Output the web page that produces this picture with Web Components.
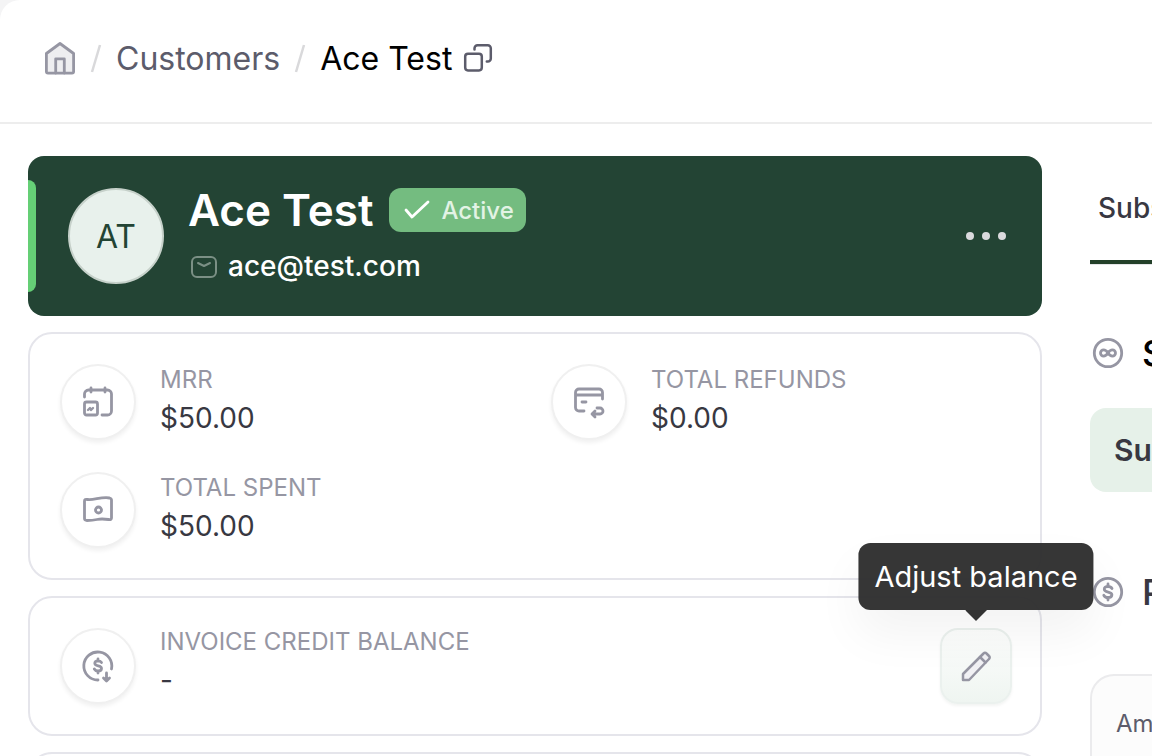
<!DOCTYPE html>
<html lang="en">
<head>
<meta charset="utf-8">
<title>Ace Test - Customers</title>
<style>
  body { margin: 0; background: #f4f4f5; font-family: Inter, "Liberation Sans", sans-serif; color: #383842; }
</style>
</head>
<body>
<customer-page></customer-page>

<script>
const icons = {
  home: '<path d="M2.400 10.500 16 .5l13.600 10V28.500a1.600 1.600 0 0 1-1.600 1.600H4a1.600 1.600 0 0 1-1.600-1.600z" fill="#eeeef0"/><path d="M11.700 30V15.800h8.600V30"/>',
  copy: '<rect x="3.200" y="10.800" width="16.600" height="16.600" rx="2.800"/><path d="M12.500 6.500V5.200a3 3 0 0 1 3-3h10.300a3 3 0 0 1 3 3v10.300a3 3 0 0 1-3 3h-1"/>',
  mail: '<rect x="2" y="5" width="24" height="20" rx="5"/><path d="m8 11 6 3 6-3"/>',
  check: '<path d="m3 14 6 7L25 6"/>',
  calendar: '<path d="M2.500 11V8a4 4 0 0 1 4-4h19a4 4 0 0 1 4 4v17a4 4 0 0 1-4 4H20"/><path d="M9 2v4M23 2v4"/><rect x="2.500" y="16" width="13" height="13" rx="2"/><path d="m6 24 2-2 1 2 2-2" stroke-width="2.400"/>',
  refund: '<path d="M11 25H6a3.500 3.500 0 0 1-3.500-3.500v-15A3.500 3.500 0 0 1 6 3h20a3.500 3.500 0 0 1 3.500 3.500V13M3 9h26M9 16h4"/><path d="M24 22h3a2.500 2.500 0 0 1 0 6h-7m2-3-3 3 3 3"/>',
  cash: '<path d="M2.500 7q0-2 3-1.500c6 1 14-3 22-1.500q2 .5 2 2v18q0 2-3 1.500-7-1-11.500 0t-10 1q-2.500 0-2.500-2z"/><circle cx="16.500" cy="16" r="3"/>',
  credit: '<path d="M29.500 19A14 14 0 1 0 16 30"/><path d="M19.500 12.500c-.8-1.200-2-1.700-3.500-1.700-2 0-3.200 1-3.200 2.500 0 3.700 6.700 1.500 6.700 5.200 0 1.600-1.500 2.500-3.500 2.500-1.700 0-3-.7-3.700-2M16 9v2m0 10v2"/><path d="M24.500 23v8m-3-3 3 3 3-3"/>',
  pencil: '<path d="M3 30v-6L23.500 3.500a2 2 0 0 1 3 0l2.500 2.500a2 2 0 0 1 0 3L9 30z" fill="#f1f1f4"/><path d="m20 7 5.500 5.500"/>',
  infinity: '<circle cx="16" cy="16" r="13.700"/><path d="M16 16c-1.300 2-2.600 3.100-4.400 3.100a3.100 3.100 0 0 1 0-6.200c1.800 0 3.100 1.100 4.400 3.100s2.600 3.100 4.400 3.100a3.100 3.100 0 0 0 0-6.200c-1.800 0-3.100 1.100-4.400 3.100z"/>',
  dollar: '<circle cx="16" cy="16" r="13.700"/><path d="M20 12.500c-.8-1.400-2.300-2-4-2-2.300 0-3.700 1-3.700 2.700 0 4 7.600 1.700 7.600 5.600 0 1.700-1.600 2.800-3.900 2.800-2 0-3.500-.8-4.200-2.300M16 8v2.500m0 11V24"/>',
  dots: '<g fill="#dadadd" stroke="none"><circle cx="6" cy="16" r="4"/><circle cx="22" cy="16" r="4"/><circle cx="38" cy="16" r="4"/></g>'
};

function define(name, render) {
  customElements.define(name, class extends HTMLElement {
    constructor() {
      super();
      this.attachShadow({ mode: 'open' });
    }
    connectedCallback() {
      const template = document.createElement('template');
      template.innerHTML = render(this);
      this.shadowRoot.replaceChildren(template.content.cloneNode(true));
    }
  });
}

define('ui-icon', el => {
  const size = el.getAttribute('size') || 32;
  const width = el.getAttribute('width') || size;
  return `<style>
    :host { display: block; flex: none; color: #9696a3; }
    svg { display: block; overflow: visible; }
  </style>
  <svg width="${width}" height="${size}" viewBox="0 0 ${width} ${size}" fill="none"
    stroke="currentColor" stroke-width="${el.getAttribute('stroke') || 2.8}" stroke-linecap="round" stroke-linejoin="round" aria-hidden="true">${icons[el.getAttribute('name')]}</svg>`;
});

define('crumb-bar', () => `<style>
  :host { display: block; background: #fff; border-bottom: 2px solid #ededed; border-radius: 20px 0 0 0; }
  nav { display: flex; align-items: center; height: 118px; padding: 0 44px 4px; font-size: 32px; line-height: 40px; }
  nav, a { color: #000; text-decoration: none; }
  .home { display: block; }
  .parent { color: #5c5c6b; }
  .sep { flex: none; width: 40px; display: grid; place-items: center; }
  .sep svg { display: block; }
  button { margin: 0 0 0 10px; padding: 0; border: 0; background: none; display: block; }
  ui-icon.copy { color: #5c5c6b; }
  </style>
  <nav aria-label="Breadcrumb">
    <a class="home" href="#home" aria-label="Home"><ui-icon name="home"></ui-icon></a>
    <span class="sep"><svg width="12" height="32" viewBox="0 0 12 32" fill="none" stroke="#d9d9db" stroke-width="2.500"><path d="M10 2 2 29"/></svg></span>
    <a class="parent" href="#customers">Customers</a>
    <span class="sep"><svg width="12" height="32" viewBox="0 0 12 32" fill="none" stroke="#d9d9db" stroke-width="2.500"><path d="M10 2 2 29"/></svg></span>
    <span>Ace Test</span>
    <button type="button" aria-label="Copy customer"><ui-icon class="copy" name="copy" stroke="2.500"></ui-icon></button>
  </nav>`);

define('customer-hero', () => `<style>
  :host { display: flex; align-items: center; height: 160px; border-radius: 16px; background: #234434; color: #fff; overflow: hidden; }
  .accent { flex: none; width: 8px; height: 112px; border-radius: 0 8px 8px 0; background: #65cf76; }
  .avatar { flex: none; box-sizing: border-box; width: 96px; height: 96px; margin: 0 24px 0 32px; border: 2px solid #c6d1ca; border-radius: 50%;
    background: #e8f1ec; color: #234434; display: grid; place-items: center; font-size: 32px; }
  .who { flex: 1; display: grid; gap: 16px; }
  .row { display: flex; align-items: center; }
  h1 { margin: 0 16px 0 0; font-size: 44px; line-height: 44px; font-weight: 600; }
  .badge { display: flex; align-items: center; gap: 10px; height: 44px; padding: 0 12px 0 14px; border-radius: 12px; background: #74bc80;
    color: #e2f3e5; font-size: 24px; font-weight: 500; }
  .badge ui-icon { color: #fff; }
  .mail { gap: 10px; padding-left: 2px; font-size: 28px; line-height: 36px; font-weight: 500; }
  .mail ui-icon { color: #7b9085; }
  .mail a { color: inherit; text-decoration: none; }
  button { flex: none; margin: 0 34px 0 0; padding: 0; border: 0; background: none; }
  </style>
  <span class="accent"></span>
  <div class="avatar">AT</div>
  <div class="who">
    <div class="row"><h1>Ace Test</h1><span class="badge"><ui-icon name="check" size="28"></ui-icon>Active</span></div>
    <div class="row mail"><ui-icon name="mail" size="28" stroke="2"></ui-icon><a href="mailto:ace@test.com">ace@test.com</a></div>
  </div>
  <button type="button" aria-label="More actions"><ui-icon name="dots" width="44"></ui-icon></button>`);

define('ui-card', () => `<style>
  :host { display: block; border: 2px solid #e5e5eb; border-radius: 24px; padding: 30px; }
  </style><slot></slot>`);

define('stat-item', el => `<style>
  :host { display: flex; gap: 24px; min-width: 0; }
  .disc { flex: none; box-sizing: border-box; width: 76px; height: 76px; border: 2px solid #f0f0f0; border-radius: 50%; background: #fff;
    box-shadow: 0 3px 4px rgba(0, 0, 0, .06); display: grid; place-items: center; }
  dl { margin: 0; flex: 1; }
  dt { font-size: 24px; line-height: 32px; color: #9696a3; text-transform: uppercase; }
  dd { margin: 0; font-size: 28px; line-height: 44px; color: #383842; }
  :host([compact]) { margin-right: -2px; }
  :host([compact]) dt { line-height: 28px; }
  :host([compact]) dd { line-height: 48px; }
  </style>
  <div class="disc"><ui-icon name="${el.getAttribute('icon')}"></ui-icon></div>
  <dl><dt>${el.getAttribute('label')}</dt><dd><slot></slot></dd></dl>
  <slot name="action"></slot>`);

define('edit-button', () => `<style>
  :host { display: block; position: relative; }
  button { box-sizing: border-box; width: 72px; height: 76px; padding: 0; border: 2px solid #ebf1ee; border-radius: 18px;
    background: linear-gradient(rgba(252, 253, 252, .8), #eff5f1); box-shadow: 0 2px 3px rgba(0, 40, 20, .05); display: grid; place-items: center; }
  .tip { position: absolute; z-index: 2; left: 50%; bottom: 94px; transform: translateX(-50%); padding: 0 16px; border-radius: 12px;
    background: rgba(46, 46, 46, .96); color: #fff; font-size: 29px; line-height: 67px; white-space: nowrap; box-shadow: 0 24px 48px rgba(0, 0, 0, .05); }
  .tip::after { content: ""; position: absolute; left: 50%; top: 100%; width: 22px; height: 11px; margin-left: -11px;
    background: #323232; clip-path: polygon(0 0, 100% 0, 50% 100%); }
  </style>
  <button type="button" aria-labelledby="tip"><ui-icon name="pencil" stroke="2.500"></ui-icon></button>
  <div class="tip" id="tip" role="tooltip">Adjust balance</div>`);

define('detail-pane', () => `<style>
  :host { display: block; overflow: hidden; white-space: nowrap; }
  .tab { display: block; padding-left: 8px; border-bottom: 4px solid #234029; box-shadow: 0 1px #e5e5e8; font-size: 28px; line-height: 104px; font-weight: 500;
    color: #383842; text-decoration: none; }
  .head { display: flex; align-items: center; gap: 18px; padding-left: 2px; }
  h2 { margin: 0; font-size: 36px; line-height: 46px; font-weight: 500; color: #000; }
  .first { margin: 66px 0 32px; }
  .second { margin: 77px 0 59px; }
  .second h2 { color: #383842; }
  .banner { padding-left: 24px; border-radius: 16px 0 0 16px; background: #e6f1e9; font-size: 30px; line-height: 84px; font-weight: 600; }
  .panel { padding: 32px 24px; border: solid #ebebed; border-width: 2px 0 0 2px; border-radius: 24px 0 0 0; background: #fcfcfc; font-size: 24px; line-height: 32px; color: #5c5c6b; height: 80px; }
  </style>
  <a class="tab" href="#subscriptions">Subs</a>
  <div class="head first"><ui-icon name="infinity"></ui-icon><h2>S</h2></div>
  <div class="banner">Su</div>
  <div class="head second"><ui-icon name="dollar"></ui-icon><h2>P</h2></div>
  <div class="panel">Am</div>`);

define('customer-page', () => `<style>
  :host { display: block; height: 100vh; overflow: hidden; }
  main { display: grid; grid-template-columns: minmax(0, 1fr) 62px; column-gap: 48px; padding: 32px 0 0 28px; background: #fff; min-height: 100%; }
  .left { display: grid; gap: 16px; align-content: start; }
  .stats { display: grid; grid-template-columns: 1fr 1fr; gap: 32px; }
  </style>
  <crumb-bar></crumb-bar>
  <main>
    <div class="left">
      <customer-hero></customer-hero>
      <ui-card><div class="stats">
        <stat-item icon="calendar" label="MRR">$50.00</stat-item>
        <stat-item icon="refund" label="Total refunds">$0.00</stat-item>
        <stat-item icon="cash" label="Total spent">$50.00</stat-item>
      </div></ui-card>
      <ui-card><stat-item compact icon="credit" label="Invoice credit balance">-<edit-button slot="action"></edit-button></stat-item></ui-card>
      <ui-card></ui-card>
    </div>
    <detail-pane></detail-pane>
  </main>`);
</script>
</body>
</html>
